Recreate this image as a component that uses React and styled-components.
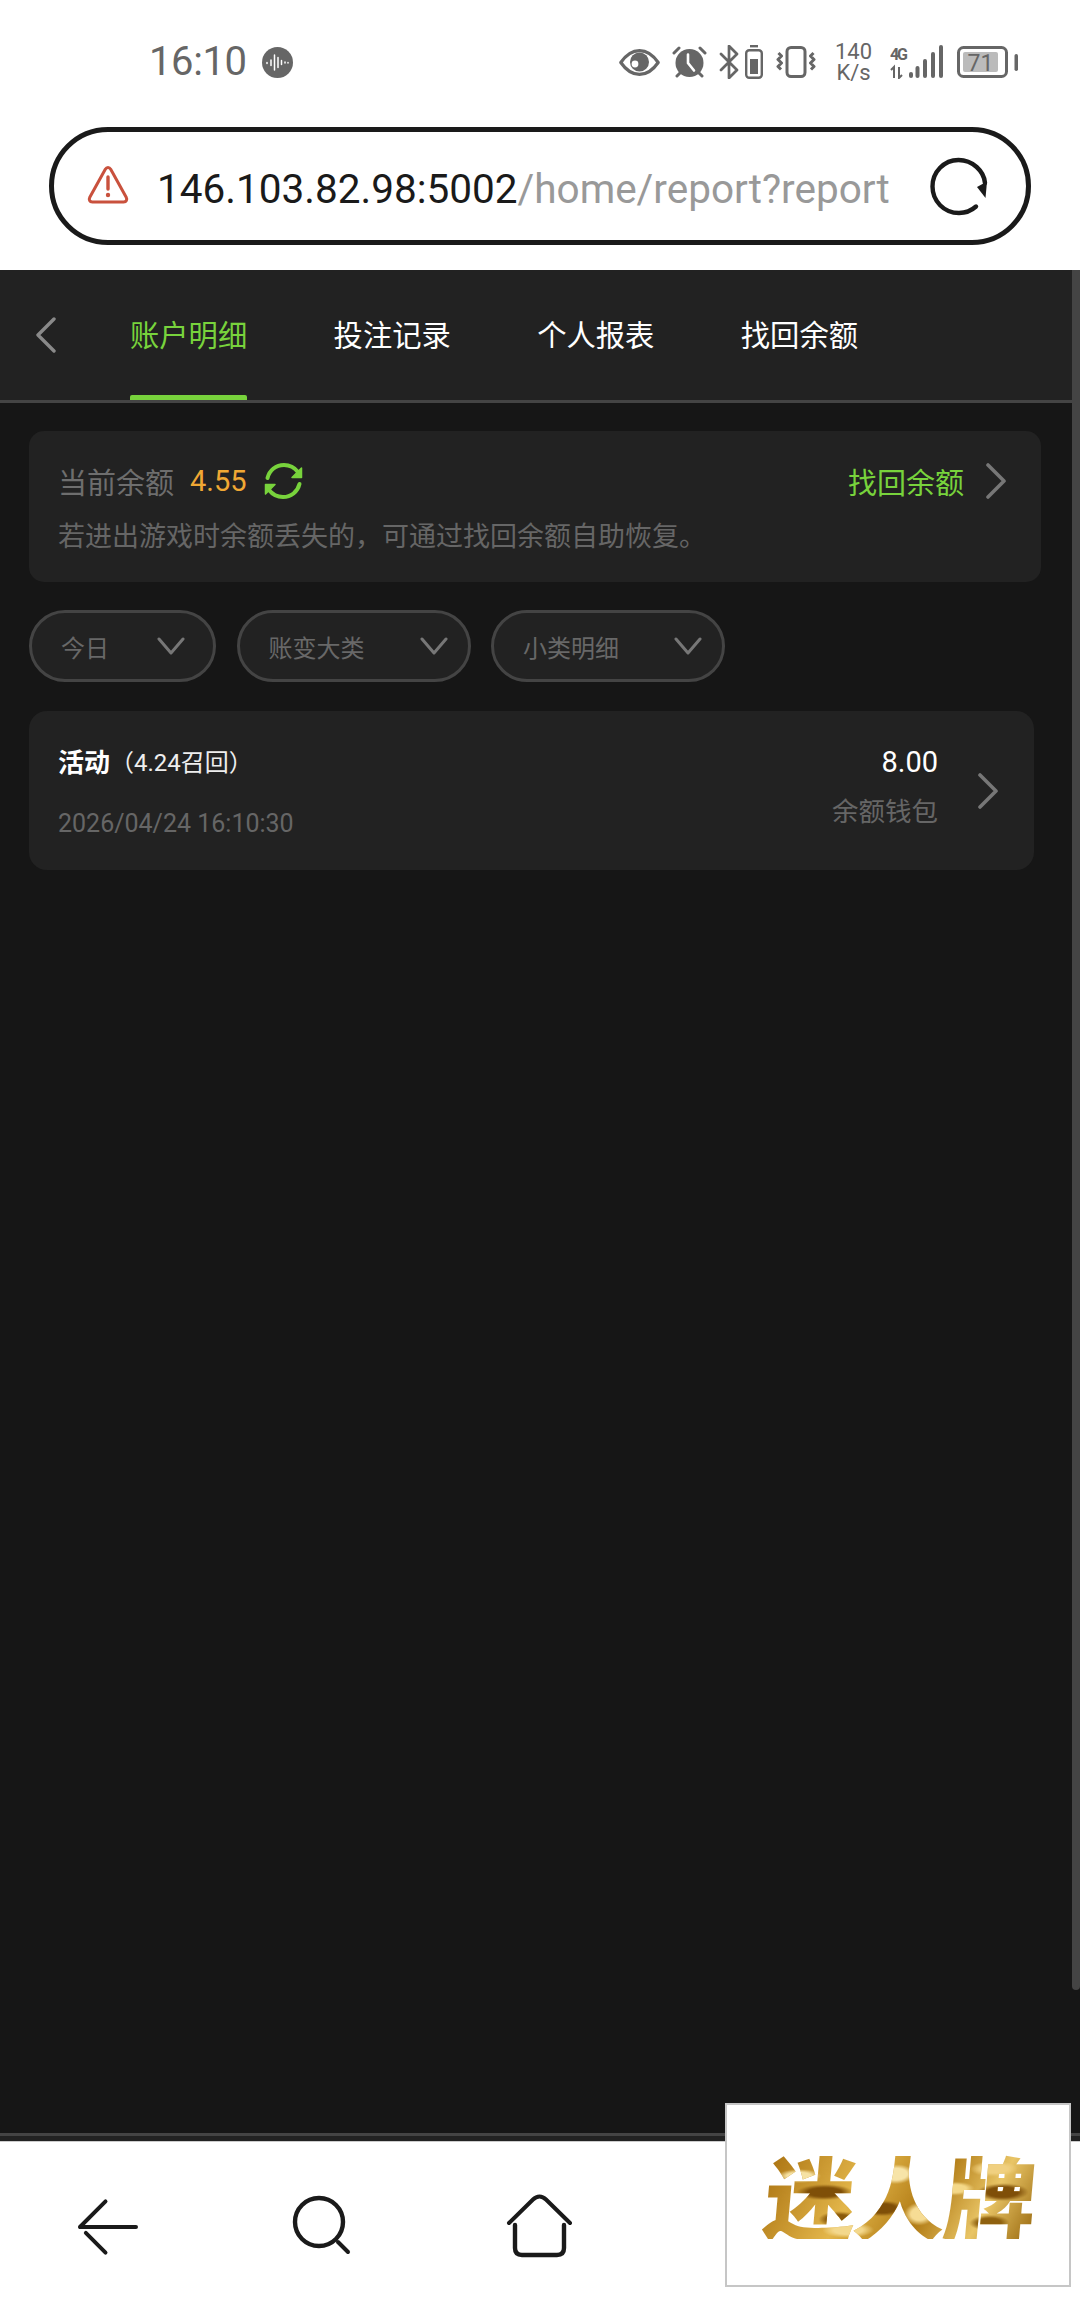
import styled, { createGlobalStyle } from "styled-components";

const GlobalStyle = createGlobalStyle`
  html, body {
    margin: 0;
    padding: 0;
    background: #fff;
  }
  * {
    box-sizing: border-box;
  }
`;

const GREEN = "#78d33c";
const FONT = `Roboto, "Noto Sans CJK SC", sans-serif`;

const Screen = styled.div`
  position: relative;
  width: 1080px;
  height: 2310px;
  display: flex;
  flex-direction: column;
  overflow: hidden;
  background: #fff;
  font-family: ${FONT};
`;

const StatusBar = styled.div`
  height: 127px;
  padding: 0 62px 3px 149px;
  display: flex;
  align-items: center;
  justify-content: space-between;
  color: #666;
`;
const StatusLeft = styled.div`
  display: flex;
  align-items: center;
  gap: 15px;
`;
const Clock = styled.span`
  font-size: 40px;
  line-height: 44px;
  letter-spacing: -0.4px;
`;
const StatusRight = styled.div`
  display: flex;
  align-items: center;
`;
const StatusIcon = styled.svg`
  display: block;
  flex: none;
  margin-left: ${(p) => p.$ml || 0}px;
`;
const Speed = styled.div`
  margin-left: 19px;
  width: 37px;
  font-size: 22px;
  line-height: 21px;
  text-align: center;
  white-space: nowrap;
`;

const UrlBar = styled.div`
  height: 118px;
  margin: 0 49px 25px;
  padding: 0 38px 0 33px;
  border: 5px solid #1a1a1a;
  border-radius: 59px;
  display: flex;
  align-items: center;
`;
const WarningIcon = styled.svg`
  display: block;
  flex: none;
  margin-top: -3px;
`;
const UrlText = styled.div`
  width: 733px;
  margin: 6px 0 0 28px;
  overflow: hidden;
  white-space: nowrap;
  font-size: 40.5px;
  line-height: 50px;
  color: #999;
`;
const UrlHost = styled.span`
  color: #1a1a1a;
`;
const ReloadIcon = styled.svg`
  display: block;
  margin-left: 38px;
  flex: none;
`;

const Page = styled.div`
  flex: 1;
  display: flex;
  flex-direction: column;
  background: #161616;
`;
const Header = styled.div`
  height: 133px;
  padding-left: 35px;
  display: flex;
  background: #222;
  border-bottom: 3px solid #444;
`;
const BackIcon = styled.svg`
  display: block;
  flex: none;
  align-self: center;
  margin-right: 73px;
`;
const Tabs = styled.div`
  display: flex;
  gap: 86.6px;
`;
const Tab = styled.div`
  position: relative;
  width: 117px;
  padding-bottom: 4px;
  display: flex;
  align-items: center;
  font-size: 29.3px;
  white-space: nowrap;
  color: ${(p) => (p.$active ? GREEN : "#fff")};
  &::after {
    content: "";
    display: ${(p) => (p.$active ? "block" : "none")};
    position: absolute;
    left: 0;
    right: 0;
    bottom: 0;
    height: 5px;
    border-radius: 2px 2px 0 0;
    background: ${GREEN};
  }
`;

const Content = styled.div`
  flex: 1;
  padding: 28px 0 0 29px;
  display: flex;
  flex-direction: column;
`;
const BalanceCard = styled.div`
  width: 1012px;
  height: 151px;
  padding: 30px 34px 0 29px;
  border-radius: 15px;
  background: #222;
`;
const BalanceRow = styled.div`
  height: 40px;
  display: flex;
  align-items: center;
`;
const MutedLabel = styled.span`
  font-size: 29px;
  color: #6e6e6e;
`;
const Amount = styled.span`
  margin-left: 16px;
  font-size: 29px;
  color: #f0a834;
`;
const RefreshIcon = styled.svg`
  display: block;
  margin-left: 17px;
`;
const RecoverLink = styled.span`
  margin-left: auto;
  font-size: 29px;
  color: ${GREEN};
`;
const Chevron = styled.svg`
  display: block;
  flex: none;
  margin-left: ${(p) => p.$ml}px;
`;
const Hint = styled.div`
  margin-top: 16px;
  font-size: 27px;
  line-height: 40px;
  color: #666;
  white-space: nowrap;
`;

const Filters = styled.div`
  margin-top: 28px;
  display: flex;
  gap: 20.5px;
`;
const FilterPill = styled.div`
  width: ${(p) => p.$width}px;
  height: 72px;
  padding: 0 ${(p) => p.$end}px 0 29px;
  display: flex;
  align-items: center;
  justify-content: space-between;
  border: 3px solid #444;
  border-radius: 36px;
  background: #222;
  font-size: 24px;
  color: #686868;
`;
const DownIcon = styled.svg`
  display: block;
  flex: none;
`;

const RecordCard = styled.div`
  width: 1005px;
  height: 159px;
  margin-top: 29px;
  padding: 0 35px 0 29px;
  display: flex;
  align-items: center;
  border-radius: 18px;
  background: #222;
`;
const RecordLeft = styled.div`
  flex: 1;
  align-self: stretch;
  padding-top: 30px;
`;
const RecordTitle = styled.div`
  height: 38px;
  display: flex;
  align-items: center;
  color: #eee;
  font-size: 24px;
  white-space: nowrap;
`;
const RecordName = styled.span`
  font-size: 26px;
  font-weight: 700;
  color: #fff;
`;
const RecordTime = styled.div`
  margin-top: 26px;
  font-size: 25px;
  line-height: 38px;
  color: #666;
`;
const RecordRight = styled.div`
  align-self: stretch;
  padding-top: 32px;
  text-align: right;
`;
const RecordAmount = styled.div`
  font-size: 29px;
  line-height: 38px;
  color: #fff;
`;
const RecordWallet = styled.div`
  margin-top: 12px;
  font-size: 26.5px;
  line-height: 38px;
  color: #666;
`;

const FooterStrip = styled.div`
  height: 8px;
  background: #222;
  border-top: 3px solid #444;
`;
const BottomNav = styled.div`
  height: 169px;
  padding-left: 75px;
  display: flex;
  align-items: center;
  gap: 154px;
  border-top: 1px solid #ccc;
  background: #fff;
`;
const NavIcon = styled.svg`
  display: block;
  flex: none;
`;

const Scrollbar = styled.div`
  position: absolute;
  top: 270px;
  right: 0;
  width: 8px;
  height: 1720px;
  border-radius: 0 0 4px 4px;
  background: #444;
`;
const FloatingLogo = styled.div`
  position: absolute;
  left: 725px;
  top: 2103px;
  width: 346px;
  height: 184px;
  display: flex;
  align-items: center;
  justify-content: center;
  border: 2px solid #c6c6c6;
  background: #fff;
`;
const LogoText = styled.span`
  font-family: "Noto Sans CJK SC", sans-serif;
  font-size: 92px;
  font-weight: 900;
  line-height: 1;
  white-space: nowrap;
  letter-spacing: -2px;
  transform: translate(2px, -1px) scaleY(0.98) skewX(-5deg);
  color: transparent;
  background-color: #c48d1c;
  background-image:
    radial-gradient(ellipse 22px 7px at 12% 30%, #f6e2a4 0 55%, transparent 100%),
    radial-gradient(ellipse 28px 8px at 22% 48%, #7f4f08 0 60%, transparent 100%),
    radial-gradient(ellipse 20px 8px at 28% 78%, #8a5a0c 0 60%, transparent 100%),
    radial-gradient(ellipse 18px 10px at 48% 28%, #f7e4a8 0 60%, transparent 100%),
    radial-gradient(ellipse 22px 8px at 44% 66%, #7f4f08 0 60%, transparent 100%),
    radial-gradient(ellipse 16px 12px at 58% 72%, #f6dc94 0 55%, transparent 100%),
    radial-gradient(ellipse 20px 7px at 70% 44%, #f4d888 0 60%, transparent 100%),
    radial-gradient(ellipse 26px 9px at 88% 48%, #7f4f08 0 60%, transparent 100%),
    radial-gradient(ellipse 24px 8px at 84% 22%, #f0d080 0 55%, transparent 100%),
    radial-gradient(ellipse 26px 8px at 32% 90%, #f3d88c 0 55%, transparent 100%),
    radial-gradient(ellipse 20px 8px at 84% 82%, #8f610f 0 60%, transparent 100%),
    linear-gradient(115deg, #a8700f, #e3b64a 35%, #b07a14 60%, #e9c566 80%, #9a6a10);
  -webkit-background-clip: text;
  background-clip: text;
`;

const RightChevron = ({ ml = 0 }) => (
  <Chevron $ml={ml} width="22" height="36" viewBox="0 0 22 36" fill="none">
    <path d="M3 2l16 16L3 34" stroke="#777" strokeWidth="3.6" strokeLinecap="round" strokeLinejoin="round" />
  </Chevron>
);

const DownChevron = () => (
  <DownIcon width="28" height="18" viewBox="0 0 28 18" fill="none">
    <path d="M2 2l12 14L26 2" stroke="#777" strokeWidth="3" strokeLinecap="round" strokeLinejoin="round" />
  </DownIcon>
);

const StatusIcons = () => (
  <StatusRight>
    <StatusIcon width="41" height="27" viewBox="0 0 41 27" fill="none">
      <path d="M1.8 13.5C8 4.5 14 1.6 20.5 1.6S33 4.5 39.2 13.5C33 22.5 27 25.4 20.5 25.4S8 22.5 1.8 13.5Z" stroke="#666" strokeWidth="3.2" strokeLinejoin="round" />
      <circle cx="20.5" cy="13" r="9.5" fill="#666" />
      <circle cx="16" cy="15" r="3.4" fill="#fff" />
    </StatusIcon>
    <StatusIcon $ml={12} width="35" height="32" viewBox="0 0 35 32" fill="none">
      <circle cx="17.5" cy="17" r="14" fill="#666" />
      <path d="M16 8.500V17l6 7.500" stroke="#fff" strokeWidth="2.6" strokeLinecap="round" />
      <path d="M2 7l5-5M28 2l5 5M5 30l3-3M30 30l-3-3" stroke="#666" strokeWidth="3" strokeLinecap="round" />
    </StatusIcon>
    <StatusIcon $ml={12} width="20" height="34" viewBox="0 0 20 34" fill="none">
      <path d="M2 9l16 16-8 8V1l8 8L2 25" stroke="#666" strokeWidth="2.7" strokeLinejoin="round" strokeLinecap="round" />
    </StatusIcon>
    <StatusIcon $ml={6} width="18" height="34" viewBox="0 0 18 34" fill="none">
      <rect x="5" y="0" width="8" height="2.4" fill="#666" />
      <rect x="1.2" y="5.2" width="15.6" height="27.6" rx="3" stroke="#666" strokeWidth="2.4" />
      <rect x="5" y="14" width="8" height="15" fill="#666" />
    </StatusIcon>
    <StatusIcon $ml={13} width="40" height="32" viewBox="0 0 40 32" fill="none">
      <rect x="11" y="1.5" width="18" height="29" rx="4" stroke="#666" strokeWidth="3" />
      <path d="M2.500 7l3 3-3.500 3.500 3.500 3.500-3.500 3.500 3 3M37.500 7l-3 3 3.500 3.500-3.500 3.500 3.500 3.500-3 3" stroke="#666" strokeWidth="3" strokeLinejoin="round" />
    </StatusIcon>
    <Speed>
      140
      <br />
      K/s
    </Speed>
    <StatusIcon $ml={18} width="53" height="34" viewBox="0 0 53 34" fill="none">
      <text x="0" y="15" fontFamily="Roboto, sans-serif" fontSize="16" fontWeight="700" fill="#666" textLength="18">4G</text>
      <path d="M4 33V22l-3 3M9 22v11l3-3" stroke="#666" strokeWidth="2" />
      <rect x="19" y="27" width="4" height="6" rx="2" fill="#666" />
      <rect x="25.5" y="21" width="4" height="12" rx="2" fill="#666" />
      <rect x="33" y="14" width="4" height="19" rx="2" fill="#666" />
      <rect x="41" y="7" width="4" height="26" rx="2" fill="#666" />
      <rect x="49" y="0" width="4" height="33" rx="2" fill="#666" />
    </StatusIcon>
    <StatusIcon $ml={14} width="61" height="32" viewBox="0 0 61 32" fill="none">
      <rect x="1.5" y="1.5" width="48" height="29" rx="5" stroke="#666" strokeWidth="3" />
      <rect x="6" y="6" width="35" height="20" rx="2" fill="#bbb" />
      <text x="23.5" y="25" textAnchor="middle" fontFamily="Roboto, sans-serif" fontSize="23" fill="#666">71</text>
      <rect x="57.5" y="8" width="3.5" height="17" rx="1.7" fill="#666" />
    </StatusIcon>
  </StatusRight>
);

export default function App() {
  return (
    <Screen>
      <GlobalStyle />
      <StatusBar>
        <StatusLeft>
          <Clock>16:10</Clock>
          <StatusIcon width="31" height="31" viewBox="0 0 31 31">
            <circle cx="15.5" cy="15.5" r="15.5" fill="#666" />
            <path d="M5 15.500v1M9 13v5.500M12.500 8v15M16 10.500v10M19.500 13.500v4M23 15v1M26 15.500v.5" stroke="#fff" strokeWidth="1.5" strokeLinecap="round" />
          </StatusIcon>
        </StatusLeft>
        <StatusIcons />
      </StatusBar>

      <UrlBar>
        <WarningIcon width="42" height="39" viewBox="0 0 42 39" fill="none">
          <path d="M21 2.500c1.200 0 2 .6 2.700 1.800l15.500 28c1.200 2.300.2 4.700-2.600 4.700H5.400c-2.800 0-3.800-2.400-2.600-4.700l15.500-28c.7-1.200 1.500-1.800 2.700-1.800Z" stroke="#c9513d" strokeWidth="3" strokeLinejoin="round" />
          <path d="M21 12v12" stroke="#c9513d" strokeWidth="3.4" strokeLinecap="round" />
          <circle cx="21" cy="30" r="2.2" fill="#c9513d" />
        </WarningIcon>
        <UrlText>
          <UrlHost>146.103.82.98:5002</UrlHost>/home/report?reportType=1
        </UrlText>
        <ReloadIcon width="60" height="60" viewBox="0 0 60 60" fill="none">
          <path d="M48 50.500C43.500 54.500 37 57 31 57 16 57 4.500 45 4.500 30.500S16 4 30.500 4C44.500 4 56 15 57 27" stroke="#1a1a1a" strokeWidth="4.4" strokeLinecap="round" />
          <path d="M49 31l10-5.500-1.500 16.500Z" fill="#1a1a1a" />
        </ReloadIcon>
      </UrlBar>

      <Page>
        <Header>
          <BackIcon width="22" height="36" viewBox="0 0 22 36" fill="none">
            <path d="M19 2L3 18l16 16" stroke="#8a8a8a" strokeWidth="3.4" strokeLinecap="round" strokeLinejoin="round" />
          </BackIcon>
          <Tabs>
            <Tab $active>账户明细</Tab>
            <Tab>投注记录</Tab>
            <Tab>个人报表</Tab>
            <Tab>找回余额</Tab>
          </Tabs>
        </Header>

        <Content>
          <BalanceCard>
            <BalanceRow>
              <MutedLabel>当前余额</MutedLabel>
              <Amount>4.55</Amount>
              <RefreshIcon width="39" height="38" viewBox="0 0 39 38" fill="none">
                <path d="M3.500 16C5.500 8 12 3 20 3c5.500 0 10.500 2.500 14 7" stroke={GREEN} strokeWidth="4" strokeLinecap="round" />
                <path d="M37.500 6V15.500H28Z" fill={GREEN} stroke={GREEN} strokeWidth="1.5" strokeLinejoin="round" />
                <path d="M35.500 22C33.500 30 27 35 19 35c-5.500 0-10.500-2.500-14-7" stroke={GREEN} strokeWidth="4" strokeLinecap="round" />
                <path d="M1.500 32V22.500H11Z" fill={GREEN} stroke={GREEN} strokeWidth="1.5" strokeLinejoin="round" />
              </RefreshIcon>
              <RecoverLink>找回余额</RecoverLink>
              <RightChevron ml={21} />
            </BalanceRow>
            <Hint>若进出游戏时余额丢失的，可通过找回余额自助恢复。</Hint>
          </BalanceCard>

          <Filters>
            <FilterPill $width={187} $end={28}>
              今日
              <DownChevron />
            </FilterPill>
            <FilterPill $width={234} $end={20}>
              账变大类
              <DownChevron />
            </FilterPill>
            <FilterPill $width={234} $end={20}>
              小类明细
              <DownChevron />
            </FilterPill>
          </Filters>

          <RecordCard>
            <RecordLeft>
              <RecordTitle>
                <RecordName>活动</RecordName>（4.24召回）
              </RecordTitle>
              <RecordTime>2026/04/24 16:10:30</RecordTime>
            </RecordLeft>
            <RecordRight>
              <RecordAmount>8.00</RecordAmount>
              <RecordWallet>余额钱包</RecordWallet>
            </RecordRight>
            <RightChevron ml={39} />
          </RecordCard>
        </Content>

        <FooterStrip />
      </Page>

      <BottomNav>
        <NavIcon width="63" height="64" viewBox="0 0 64 64" fill="none">
          <path d="M5 33h57M5 33L31 7M11 39l20 20" stroke="#1a1a1a" strokeWidth="4" strokeLinecap="round" strokeLinejoin="round" />
        </NavIcon>
        <NavIcon width="60" height="64" viewBox="0 0 60 64" fill="none">
          <circle cx="27" cy="28" r="24" stroke="#1a1a1a" strokeWidth="4.4" />
          <path d="M46 48l10 10" stroke="#1a1a1a" strokeWidth="4" strokeLinecap="round" />
        </NavIcon>
        <NavIcon width="67" height="64" viewBox="0 0 67 64" fill="none">
          <path d="M3 29L27 5.500c4-4 9-4 13 0L64 29" stroke="#1a1a1a" strokeWidth="4" strokeLinecap="round" />
          <path d="M9 31v23c0 4.500 2.500 7 7 7h35c4.500 0 7-2.500 7-7V31" stroke="#1a1a1a" strokeWidth="4.4" strokeLinecap="round" />
        </NavIcon>
      </BottomNav>

      <Scrollbar />
      <FloatingLogo>
        <LogoText>迷人牌</LogoText>
      </FloatingLogo>
    </Screen>
  );
}
